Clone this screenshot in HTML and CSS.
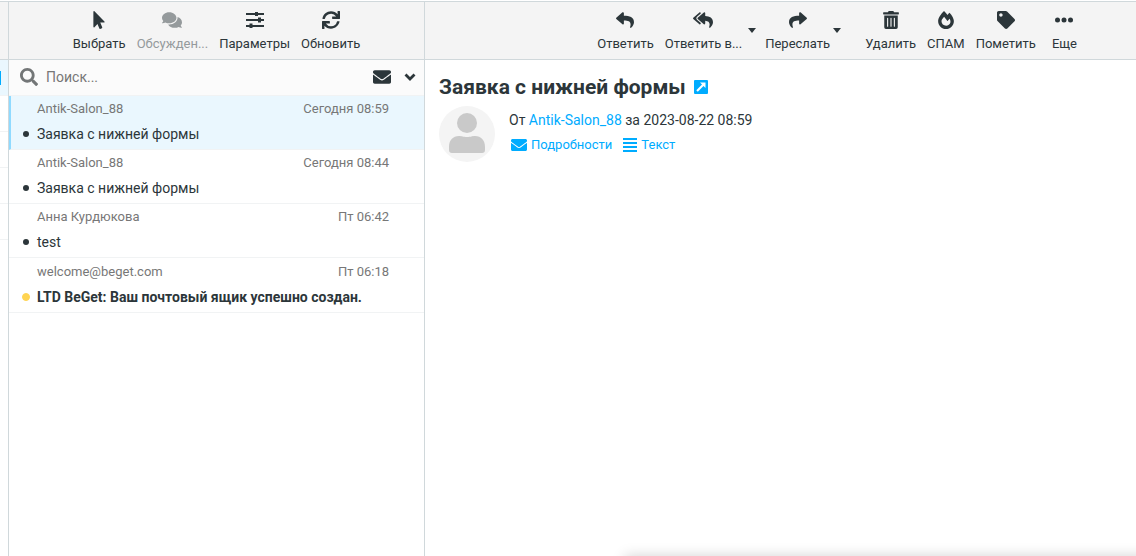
FILE: index.html
```html
<!DOCTYPE html>
<html lang="ru">
<head>
<meta charset="utf-8">
<title>Почта</title>
<link rel="stylesheet" href="styles.css">
</head>
<body>
<svg class="sprite" aria-hidden="true">
  <symbol id="i-pointer" viewBox="0 0 320 512"><path d="M302.189 329.126H196.105l55.831 135.993c3.889 9.428-.555 19.999-9.444 23.999l-49.165 21.427c-9.165 4-19.443-.571-23.332-9.714l-53.053-129.136-86.664 89.138C18.729 472.71 0 463.554 0 447.977V18.299C0 1.899 19.921-6.096 30.277 5.443l284.412 292.542c11.472 11.179 3.007 31.141-12.5 31.141z"/></symbol>
  <symbol id="i-comments" viewBox="0 0 576 512"><path d="M416 192c0-88.4-93.1-160-208-160S0 103.6 0 192c0 34.3 14.1 65.9 38 92-13.4 30.2-35.5 54.2-35.8 54.5-2.2 2.3-2.8 5.7-1.5 8.7S4.8 352 8 352c36.6 0 66.9-12.3 88.7-25 32.2 15.7 70.3 25 111.3 25 114.9 0 208-71.6 208-160zm122 220c23.9-26 38-57.7 38-92 0-66.9-53.5-124.2-129.3-148.1.9 6.6 1.3 13.3 1.3 20.1 0 105.9-107.7 192-240 192-10.8 0-21.3-.8-31.7-1.9C207.8 439.6 281.8 480 368 480c41 0 79.1-9.2 111.3-25 21.8 12.7 52.1 25 88.7 25 3.2 0 6.1-1.9 7.3-4.8 1.3-2.9.7-6.3-1.5-8.7-.3-.3-22.4-24.2-35.8-54.5z"/></symbol>
  <symbol id="i-sliders" viewBox="0 0 18 18"><path d="M0 2h9V1h3v1h6v2h-6v1H9V4H0zM0 8h12V6.500h3V8h3v2h-3v1.500h-3V10H0zM0 14h3.500v-1.500h3V14H18v2H6.500v1h-3v-1H0z"/></symbol>
  <symbol id="i-sync" viewBox="0 0 512 512"><path d="M440.650 12.570l4 82.770A247.160 247.160 0 0 0 255.830 8C134.730 8 33.910 94.920 12.290 209.820A12 12 0 0 0 24.090 224h49.050a12 12 0 0 0 11.670-9.260 175.910 175.910 0 0 1 317-56.940l-101.460-4.860a12 12 0 0 0-12.570 12v47.410a12 12 0 0 0 12 12H500a12 12 0 0 0 12-12V12a12 12 0 0 0-12-12h-47.370a12 12 0 0 0-11.980 12.570zM255.830 432a175.610 175.610 0 0 1-146-77.800l101.800 4.870a12 12 0 0 0 12.570-12v-47.400a12 12 0 0 0-12-12H12a12 12 0 0 0-12 12V500a12 12 0 0 0 12 12h47.350a12 12 0 0 0 12-12.600l-4.150-82.570A247.170 247.170 0 0 0 255.830 504c121.110 0 221.930-86.920 243.550-201.820a12 12 0 0 0-11.800-14.180h-49.050a12 12 0 0 0-11.670 9.260A175.860 175.860 0 0 1 255.830 432z"/></symbol>
  <symbol id="i-reply" viewBox="0 0 512 512"><path d="M8.309 189.836L184.313 37.851C199.719 24.546 224 35.347 224 56.015v80.053c160.629 1.839 288 34.032 288 186.258 0 61.441-39.581 122.309-83.333 154.132-13.653 9.931-33.111-2.533-28.077-18.631 45.344-145.012-21.507-183.510-176.590-185.742V360c0 20.700-24.300 31.453-39.687 18.164l-176.004-152c-11.071-9.562-11.086-26.753 0-36.328z"/></symbol>
  <symbol id="i-replyall" viewBox="0 0 576 512"><path d="M136.309 189.836L312.313 37.851C327.720 24.546 352 35.348 352 56.015v82.763c129.182 10.231 224 52.212 224 183.548 0 61.441-39.582 122.309-83.333 154.132-13.653 9.931-33.111-2.533-28.077-18.631 38.512-123.162-3.922-169.482-112.590-182.015v84.175c0 20.701-24.300 31.453-39.687 18.164L136.309 226.164c-11.071-9.561-11.086-26.753 0-36.328zm-128 36.328L184.313 378.150C199.700 391.439 224 380.687 224 359.986v-15.818l-108.606-93.785A55.960 55.960 0 0 1 96 207.998a55.953 55.953 0 0 1 19.393-42.380L224 71.832V56.015c0-20.667-24.280-31.469-39.687-18.164L8.309 189.836c-11.086 9.575-11.071 26.767 0 36.328z"/></symbol>
  <symbol id="i-trash" viewBox="0 0 448 512"><path d="M32 464a48 48 0 0 0 48 48h288a48 48 0 0 0 48-48V128H32zm272-256a16 16 0 0 1 32 0v224a16 16 0 0 1-32 0zm-96 0a16 16 0 0 1 32 0v224a16 16 0 0 1-32 0zm-96 0a16 16 0 0 1 32 0v224a16 16 0 0 1-32 0zM432 32H312l-9.400-18.700A24 24 0 0 0 281.100 0H166.800a23.720 23.720 0 0 0-21.400 13.300L136 32H16A16 16 0 0 0 0 48v32a16 16 0 0 0 16 16h416a16 16 0 0 0 16-16V48a16 16 0 0 0-16-16z"/></symbol>
  <symbol id="i-fire" viewBox="0 0 448 512"><path d="M323.560 51.200c-20.800 19.300-39.580 39.590-56.220 59.970C240.080 73.620 206.280 35.530 168 0 69.740 91.170 0 209.960 0 281.600 0 408.850 100.290 512 224 512s224-103.150 224-230.400c0-53.270-51.980-163.140-124.440-230.400zm-19.470 340.650C282.430 407.010 255.720 416 226.860 416 154.710 416 96 368.260 96 290.750c0-38.610 24.310-72.630 72.790-130.750 6.930 7.980 98.830 125.340 98.830 125.340l58.630-66.880c4.140 6.850 7.910 13.550 11.270 19.970 27.350 52.190 15.810 118.970-33.430 153.420z"/></symbol>
  <symbol id="i-tag" viewBox="0 0 512 512"><path d="M0 252.118V48C0 21.490 21.490 0 48 0h204.118a48 48 0 0 1 33.941 14.059l211.882 211.882c18.745 18.745 18.745 49.137 0 67.882L293.823 497.941c-18.745 18.745-49.137 18.745-67.882 0L14.059 286.059A48 48 0 0 1 0 252.118zM112 64c-26.510 0-48 21.490-48 48s21.490 48 48 48 48-21.490 48-48-21.490-48-48-48z"/></symbol>
  <symbol id="i-more" viewBox="0 0 18 18"><circle cx="2.500" cy="9" r="2.500"/><circle cx="9" cy="9" r="2.500"/><circle cx="15.500" cy="9" r="2.500"/></symbol>
  <symbol id="i-search" viewBox="0 0 512 512"><path d="M505 442.700L405.300 343c-4.500-4.500-10.600-7-17-7H372c27.600-35.300 44-79.700 44-128C416 93.100 322.900 0 208 0S0 93.100 0 208s93.100 208 208 208c48.300 0 92.700-16.400 128-44v16.300c0 6.400 2.500 12.500 7 17l99.700 99.700c9.400 9.400 24.600 9.400 33.900 0l28.300-28.300c9.400-9.400 9.400-24.600.1-34zM208 336c-70.700 0-128-57.200-128-128 0-70.700 57.200-128 128-128 70.700 0 128 57.200 128 128 0 70.700-57.200 128-128 128z"/></symbol>
  <symbol id="i-envelope" viewBox="0 64 512 384"><path d="M502.300 190.800c3.900-3.100 9.700-.2 9.700 4.700V400c0 26.500-21.500 48-48 48H48c-26.500 0-48-21.500-48-48V195.600c0-5 5.700-7.800 9.700-4.700 22.400 17.400 52.100 39.500 154.100 113.600 21.100 15.400 56.700 47.800 92.200 47.600 35.700.3 72-32.800 92.300-47.600 102-74.100 131.600-96.300 154-113.700zM256 320c23.200.4 56.600-29.200 73.400-41.400 132.700-96.300 142.800-104.700 173.400-128.700 5.800-4.500 9.200-11.500 9.200-18.900v-19c0-26.500-21.500-48-48-48H48c-26.500 0-48 21.500-48 48v19c0 7.400 3.400 14.300 9.200 18.900 30.600 23.900 40.700 32.400 173.400 128.700 16.800 12.200 50.200 41.800 73.400 41.400z"/></symbol>
  <symbol id="i-chevron" viewBox="0 0 12 8"><path d="M1.500 1.500L6 6l4.500-4.500" fill="none" stroke="currentColor" stroke-width="2.800"/></symbol>
  <symbol id="i-caret" viewBox="0 0 8 5"><path d="M0 0h8L4 5z"/></symbol>
  <symbol id="i-external" viewBox="0 0 14 14"><path fill-rule="evenodd" d="M1 0h12A1 1 0 0 1 14 1v12a1 1 0 0 1-1 1H1A1 1 0 0 1 0 13V1A1 1 0 0 1 1 0zM6 2.500l2 2-5.700 5.700 1.500 1.500L9.500 6l2 2V2.500z"/></symbol>
  <symbol id="i-lines" viewBox="0 0 14 14"><path d="M0 0h14v2H0zM0 4h14v2H0zM0 8h14v2H0zM0 12h14v2H0z"/></symbol>
</svg>

<div class="app">
  <nav class="folders" aria-label="Папки">
    <div class="folders-top"></div>
    <div class="folder folder-active"><span class="count"></span></div>
    <div class="folder"></div>
    <div class="folder"></div>
    <div class="folder"></div>
    <div class="folder"></div>
  </nav>

  <section class="list">
    <div class="toolbar">
      <button class="tool"><svg><use href="#i-pointer"/></svg><span>Выбрать</span></button>
      <button class="tool" disabled><svg class="wide"><use href="#i-comments"/></svg><span>Обсужден...</span></button>
      <button class="tool"><svg><use href="#i-sliders"/></svg><span>Параметры</span></button>
      <button class="tool"><svg><use href="#i-sync"/></svg><span>Обновить</span></button>
    </div>
    <form class="search">
      <label for="q" aria-label="Поиск"><svg class="search-icon"><use href="#i-search"/></svg></label>
      <input id="q" type="text" placeholder="Поиск...">
      <button type="button" aria-label="Непрочитанные"><svg class="unread-icon"><use href="#i-envelope"/></svg></button>
      <button type="button" aria-label="Параметры поиска"><svg class="chevron"><use href="#i-chevron"/></svg></button>
    </form>
    <ul class="messages">
      <li class="message selected"><div class="meta"><span>Antik-Salon_88</span><time>Сегодня 08:59</time></div><div class="subject"><i class="dot"></i>Заявка с нижней формы</div></li>
      <li class="message"><div class="meta"><span>Antik-Salon_88</span><time>Сегодня 08:44</time></div><div class="subject"><i class="dot"></i>Заявка с нижней формы</div></li>
      <li class="message"><div class="meta"><span>Анна Курдюкова</span><time>Пт 06:42</time></div><div class="subject"><i class="dot"></i>test</div></li>
      <li class="message unread"><div class="meta"><span>welcome@beget.com</span><time>Пт 06:18</time></div><div class="subject"><i class="dot"></i>LTD BeGet: Ваш почтовый ящик успешно создан.</div></li>
    </ul>
  </section>

  <main class="content">
    <div class="toolbar toolbar-end">
      <button class="tool"><svg><use href="#i-reply"/></svg><span>Ответить</span></button>
      <button class="tool"><svg class="wide"><use href="#i-replyall"/></svg><span>Ответить в...</span></button>
      <button class="drop" aria-label="Варианты ответа"><svg><use href="#i-caret"/></svg></button>
      <button class="tool"><svg class="flip"><use href="#i-reply"/></svg><span>Переслать</span></button>
      <button class="drop drop-last" aria-label="Варианты пересылки"><svg><use href="#i-caret"/></svg></button>
      <button class="tool"><svg><use href="#i-trash"/></svg><span>Удалить</span></button>
      <button class="tool"><svg><use href="#i-fire"/></svg><span>СПАМ</span></button>
      <button class="tool"><svg><use href="#i-tag"/></svg><span>Пометить</span></button>
      <button class="tool tool-more"><svg><use href="#i-more"/></svg><span>Еще</span></button>
    </div>
    <article class="mail">
      <h1>Заявка с нижней формы <a href="#" aria-label="Открыть в новом окне"><svg><use href="#i-external"/></svg></a></h1>
      <div class="sender">
        <svg class="avatar" viewBox="0 0 56 56"><circle class="avatar-bg" cx="28" cy="28" r="28"/><circle cx="28" cy="17" r="10"/><path d="M10 44v-3c0-7 4-11 10-11 3 0 4 1 8 1s5-1 8-1c6 0 10 4 10 11v3q0 3-3 3H13q-3 0-3-3z"/></svg>
        <div>
          <p class="from">От <a href="#">Antik-Salon_88</a> за 2023-08-22 08:59</p>
          <div class="links">
            <a href="#"><svg class="details-icon"><use href="#i-envelope"/></svg>Подробности</a>
            <a href="#"><svg class="text-icon"><use href="#i-lines"/></svg>Текст</a>
          </div>
        </div>
      </div>
    </article>
  </main>
</div>
<div class="popup-edge"></div>
</body>
</html>
```

FILE: styles.css
```css
* { box-sizing: border-box; }

body {
  margin: 0;
  overflow: hidden;
  background: #fff;
  color: #2c363a;
  font: 14px/20px Roboto, sans-serif;
}

.sprite { position: absolute; width: 0; height: 0; }
svg { display: block; fill: currentColor; }
a { color: #00acff; text-decoration: none; }

button {
  padding: 0;
  border: 0;
  background: none;
  color: inherit;
  font: inherit;
}

.app {
  display: grid;
  grid-template-columns: 9px 416px 1fr;
  min-height: 100vh;
  padding-top: 1px;
}

.folders, .list { border-right: 1px solid #d0d8db; }

.folders-top, .toolbar {
  height: 59px;
  border-top: 1px solid #d0d8db;
  border-bottom: 1px solid #d0d8db;
  background: #f4f4f4;
}

.folder {
  display: flex;
  align-items: center;
  height: 36px;
  border-bottom: 1px solid #f1f3f4;
}
.folder-active { background: #eaf7fe; }
.count {
  width: 1px;
  height: 14px;
  background: #00acff;
}

.toolbar {
  display: flex;
  justify-content: center;
  gap: 11px;
  padding-top: 9px;
}
.toolbar-end { justify-content: flex-end; padding-right: 59px; }

.tool {
  display: flex;
  flex-direction: column;
  align-items: center;
  gap: 5px;
  font-size: 13px;
  white-space: nowrap;
}
.tool:disabled { color: #959a9c; }
.tool svg { width: 18px; height: 18px; }
.tool .wide { width: 20px; }
.tool .flip { transform: scaleX(-1); }
.tool-more { margin-left: 5px; }

.drop {
  width: 8px;
  height: 38px;
  margin: 0 -2px 0 -5px;
}
.drop svg { width: 8px; height: 5px; }
.drop-last { margin: 0 13px 0 -8px; }

.search {
  display: flex;
  align-items: center;
  height: 36px;
  padding: 0 8px 2px 11px;
  border-bottom: 1px solid #f1f3f4;
  background: #fbfbfb;
}
.search input {
  flex: 1;
  min-width: 0;
  padding: 0 8px;
  border: 0;
  outline: 0;
  background: none;
  color: inherit;
  font: inherit;
}
.search input::placeholder { color: #777; opacity: 1; }
.search-icon { width: 18px; height: 18px; color: #737677; }
.unread-icon { width: 18px; height: 14px; }
.chevron { width: 12px; height: 8px; margin-left: 13px; }

.messages { margin: 0; padding: 0; list-style: none; }
.message {
  padding: 1px 35px 2px 13px;
  border-bottom: 1px solid #f1f3f4;
}
.selected {
  padding-left: 11px;
  border-left: 2px solid #8fdaff;
  background: #eaf7fe;
}
.meta {
  display: flex;
  justify-content: space-between;
  padding-left: 15px;
  color: #777;
  font-size: 13px;
  line-height: 24px;
}
.subject {
  display: flex;
  align-items: center;
  gap: 7px;
  line-height: 26px;
}
.dot {
  width: 8px;
  height: 8px;
  border: 1px solid transparent;
  border-radius: 50%;
  background: currentColor padding-box;
}
.unread { padding-top: 2px; }
.unread .subject { font-weight: 700; }
.unread .dot { border-color: #ffd452; background: #ffd452; }

.mail { padding: 14px; }
h1 {
  display: flex;
  align-items: center;
  gap: 8px;
  margin: 0;
  font-size: 21px;
  line-height: 26px;
}
h1 svg { width: 14px; height: 14px; }

.sender { display: flex; gap: 14px; padding-top: 6px; }
.avatar { width: 56px; height: 56px; fill: #c9c9c9; }
.avatar-bg { fill: #f4f4f4; }
.from { margin: 0; padding-top: 4px; }
.links { display: flex; gap: 11px; padding: 5px 2px; font-size: 13px; }
.links a { display: flex; align-items: center; gap: 4px; }
.details-icon { width: 16px; height: 12px; }
.text-icon { width: 14px; height: 14px; }

/* Top shadow of a panel docked below the window edge */
.popup-edge {
  position: fixed;
  top: 100%;
  right: -20px;
  left: 55%;
  height: 40px;
  box-shadow: 0 0 14px rgba(0, 0, 0, 0.18);
}
```
